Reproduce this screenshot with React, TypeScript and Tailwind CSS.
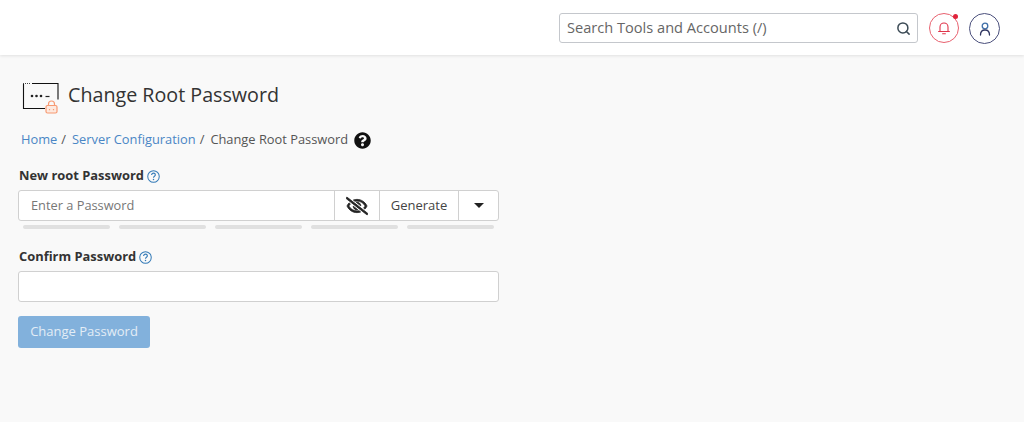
import { Search } from "lucide-react"
import { FaQuestionCircle, FaRegEyeSlash } from "react-icons/fa"

function HelpIcon() {
  return (
    <svg viewBox="0 0 14 14" className="ml-[3px] size-[13px] text-[#337ab7]" fill="none">
      <circle cx="7" cy="7" r="6.2" stroke="currentColor" strokeWidth="1.1" />
      <path d="M5 5.4a2 2 0 0 1 4 0c0 1.3-2 1.5-2 2.9" stroke="currentColor" strokeWidth="1.2" />
      <circle cx="7" cy="10.3" r="0.8" fill="currentColor" />
    </svg>
  )
}

function PageIcon() {
  return (
    <svg viewBox="0 0 38 32" className="h-[32px] w-[38px]" fill="none">
      <path d="M1 1.5h8" stroke="#444" strokeWidth="1" strokeDasharray="1 1" />
      <path d="M10 1.5h26v16M1.5 2v24.5h21.5" stroke="#111" strokeWidth="1.1" />
      <circle cx="10" cy="14" r="1.3" fill="#222" />
      <circle cx="14.5" cy="14" r="1.3" fill="#222" />
      <circle cx="19" cy="14" r="1.3" fill="#222" />
      <path d="M23.5 14.5h4" stroke="#222" strokeWidth="1.2" />
      <rect x="24" y="23.5" width="11" height="7.5" rx="1.5" fill="#fde9df" stroke="#f79a73" strokeWidth="1.2" />
      <path d="M26.5 23.5v-1.5a3 3 0 0 1 6 0v1.5" stroke="#f79a73" strokeWidth="1.2" />
      <path d="M27.5 27v1.2M31.5 27v1.2" stroke="#f79a73" strokeWidth="1.2" />
    </svg>
  )
}

function StrengthBar() {
  return <div className="h-[4px] w-[87px] rounded-full bg-[#e0e0e0]" />
}

export default function App() {
  return (
    <div className="flex h-[422px] flex-col overflow-hidden bg-[#f9f9f9] font-['Open_Sans',sans-serif] text-[13px] text-[#333]">
      {/* шапка */}
      <header className="flex h-[55px] shrink-0 items-start justify-end bg-white pt-[13px] pr-[24px] shadow-[0_1px_3px_rgba(0,0,0,0.1)]">
        <div className="flex h-[30px] w-[359px] items-center rounded-[3px] border border-[#c4c7cc] bg-white pr-[6px] pl-[7px]">
          <span className="flex-1 text-[14.6px] text-[#666]">Search Tools and Accounts (/)</span>
          <Search className="size-[15px] text-[#3b4a55]" strokeWidth={2.4} />
        </div>
        <div className="relative ml-[11px] flex size-[30px] items-center justify-center rounded-full border border-[#e8616f]">
          <svg viewBox="0 0 14 14" className="size-[14px]" fill="none" stroke="#e0354b" strokeWidth="1.1">
            <path d="M3 10.5V6a4 4 0 0 1 8 0v4.5M1.6 10.5h10.8M5.6 12.8h2.8" strokeLinecap="round" />
          </svg>
          <span className="absolute top-0 right-0 size-[5px] rounded-full bg-[#e0243c]" />
        </div>
        <div className="ml-[10px] flex size-[31px] items-center justify-center rounded-full border border-[#4a4f7c]">
          <svg viewBox="0 0 14 14" className="size-[14px]" fill="none" strokeWidth="1.3">
            <circle cx="7" cy="4" r="2.8" stroke="#3f6fa8" />
            <path d="M2.5 13c0-3.2 2-5 4.5-5s4.5 1.8 4.5 5" stroke="#2f3560" strokeLinecap="round" />
          </svg>
        </div>
      </header>

      <main className="flex flex-col pl-[18px]">
        <div className="mt-[23px] ml-[4px] flex h-[34px] items-start gap-[8px]">
          <div className="mt-[4px]">
            <PageIcon />
          </div>
          <h1 className="text-[19.7px] leading-[34px] text-[#333]">Change Root Password</h1>
        </div>

        <nav className="mt-[18px] ml-[3px] flex h-[20px] items-center text-[12.85px]">
          <a className="text-[#4a86c5]">Home</a>
          <span className="mr-[6px] ml-[4px] text-[#555]">/</span>
          <a className="text-[#4a86c5]">Server Configuration</a>
          <span className="mr-[6px] ml-[4px] text-[#555]">/</span>
          <span className="text-[#555]">Change Root Password</span>
          <FaQuestionCircle className="ml-[6px] size-[17px] text-[#111]" />
        </nav>

        <label className="mt-[16px] ml-[1px] flex h-[20px] items-center text-[12.9px] font-bold text-[#333]">
          New root Password
          <HelpIcon />
        </label>
        <div className="mt-[4px] flex h-[31px] w-[481px] rounded-[3px] border border-[#d0d0d0] bg-white">
          <div className="flex flex-1 items-center pl-[12px] text-[12.8px] text-[#777]">Enter a Password</div>
          <div className="flex w-[45px] items-center justify-center border-l border-[#d0d0d0]">
            <FaRegEyeSlash className="size-[22px] text-[#222]" stroke="currentColor" strokeWidth={24} />
          </div>
          <div className="flex w-[79px] items-center justify-center border-l border-[#d0d0d0] text-[13px] text-[#444]">Generate</div>
          <div className="flex w-[40px] items-center justify-center border-l border-[#d0d0d0]">
            <span className="border-x-[5px] border-t-[5px] border-x-transparent border-t-[#222]" />
          </div>
        </div>
        <div className="mt-[4px] ml-[5px] flex gap-[9px]">
          <StrengthBar />
          <StrengthBar />
          <StrengthBar />
          <StrengthBar />
          <StrengthBar />
        </div>

        <label className="mt-[18px] ml-[1px] flex h-[20px] items-center text-[12.9px] font-bold text-[#333]">
          Confirm Password
          <HelpIcon />
        </label>
        <div className="mt-[4px] h-[31px] w-[481px] rounded-[3px] border border-[#d0d0d0] bg-white" />

        <button className="mt-[14px] h-[32px] w-[132px] rounded-[3px] bg-[#82b1dc] text-[13px] text-[#e3edf6]">Change Password</button>
      </main>
    </div>
  )
}
